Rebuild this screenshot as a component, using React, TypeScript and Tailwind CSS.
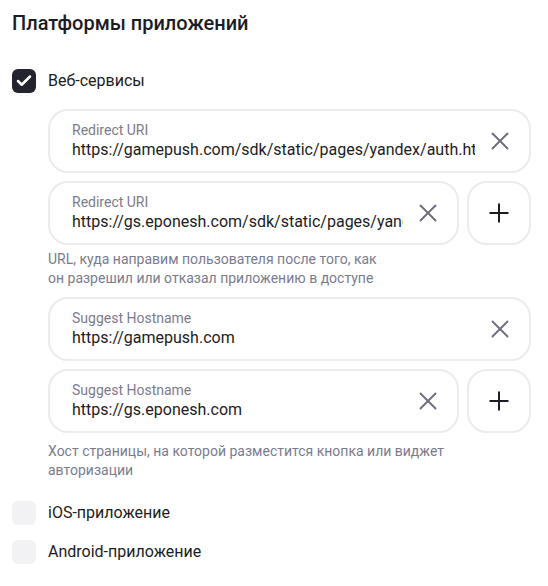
import { X, Plus, Check } from 'lucide-react'

interface UrlFieldProps {
	label: string
	value: string
	withAdd?: boolean
}

const UrlField = ({ label, value, withAdd }: UrlFieldProps) => {
	return (
		<div className="flex gap-2">
			<div className="flex flex-1 min-w-0 h-16 items-center border-2 border-[#ebebf0] rounded-[20px] pl-[22px] pr-[14px] gap-[10px]">
				<div className="flex flex-col flex-1 min-w-0 overflow-hidden whitespace-nowrap">
					<span className="text-[14px] leading-[18px] text-[#7b7b8e]">{label}</span>
					<span className="text-[16px] leading-[22px] text-[#1c1c24] overflow-hidden">{value}</span>
				</div>
				<X className="w-[30px] h-[30px] text-[#6e6e80] shrink-0" strokeWidth={1.5} />
			</div>
			{withAdd && (
				<div className="flex w-16 h-16 shrink-0 items-center justify-center border-2 border-[#ebebf0] rounded-[20px]">
					<Plus className="w-[30px] h-[30px] text-[#1c1c24]" strokeWidth={1.6} />
				</div>
			)}
		</div>
	)
}

const Hint = ({ children }: { children: React.ReactNode }) => (
	<p className="text-[14px] leading-[19px] text-[#7b7b8e]">{children}</p>
)

const CheckRow = ({ label, checked }: { label: string; checked?: boolean }) => (
	<div className="flex items-center gap-3 h-6">
		{checked ? (
			<div className="w-6 h-6 rounded-[6px] bg-[#24242e] flex items-center justify-center">
				<Check className="w-[18px] h-[18px] text-white" strokeWidth={3.4} />
			</div>
		) : (
			<div className="w-6 h-6 rounded-[6px] bg-[#f2f2f5]" />
		)}
		<span className="text-[16px] text-[#1c1c24]">{label}</span>
	</div>
)

const App = () => {
	return (
		<div
			className="w-[548px] h-[586px] bg-white pl-3 pr-[17px] pt-[9px] overflow-hidden"
			style={{ fontFamily: 'Roboto, "Noto Sans", sans-serif' }}
		>
			<h2 className="text-[20px] leading-7 font-medium text-[#1c1c24]">Платформы приложений</h2>
			<div className="mt-[32px]">
				<CheckRow label="Веб-сервисы" checked />
			</div>
			<div className="pl-9 mt-[16px] flex flex-col">
				<UrlField label="Redirect URI" value="https://gamepush.com/sdk/static/pages/yandex/auth.html" />
				<div className="mt-2">
					<UrlField label="Redirect URI" value="https://gs.eponesh.com/sdk/static/pages/yandex/auth.html" withAdd />
				</div>
				<div className="mt-[5px]">
					<Hint>
						URL, куда направим пользователя после того, как
						<br />
						он разрешил или отказал приложению в доступе
					</Hint>
				</div>
				<div className="mt-[9px]">
					<UrlField label="Suggest Hostname" value="https://gamepush.com" />
				</div>
				<div className="mt-2">
					<UrlField label="Suggest Hostname" value="https://gs.eponesh.com" withAdd />
				</div>
				<div className="mt-[9px]">
					<Hint>
						Хост страницы, на которой разместится кнопка или виджет
						<br />
						авторизации
					</Hint>
				</div>
			</div>
			<div className="mt-[21px] flex flex-col gap-[15px]">
				<CheckRow label="iOS-приложение" />
				<CheckRow label="Android-приложение" />
			</div>
		</div>
	)
}

export default App
